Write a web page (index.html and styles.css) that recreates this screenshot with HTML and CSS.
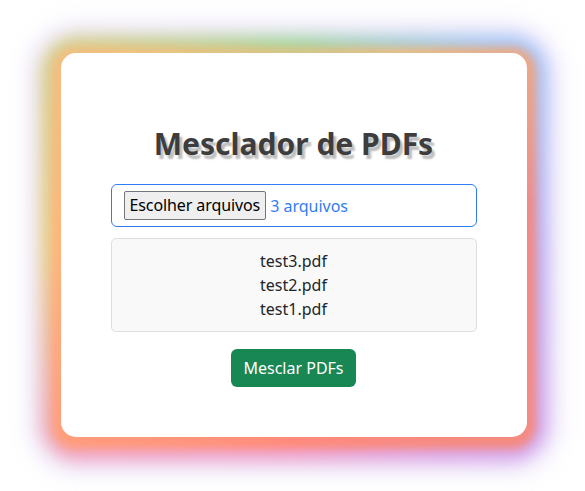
FILE: index.html
```html
<!DOCTYPE html>
<html lang="pt-BR">
<head>
<meta charset="utf-8">
<title>Mesclador de PDFs</title>
<link rel="stylesheet" href="styles.css">
</head>
<body>
<main class="page">
  <div class="glow">
    <section class="card">
      <h1 class="title">Mesclador de PDFs</h1>
      <div class="file-input">
        <span class="file-btn">Escolher arquivos</span>
        <span class="file-count">3 arquivos</span>
      </div>
      <ul class="file-list">
        <li>test3.pdf</li>
        <li>test2.pdf</li>
        <li>test1.pdf</li>
      </ul>
      <button class="merge-btn" type="button">Mesclar PDFs</button>
    </section>
  </div>
</main>
</body>
</html>
```

FILE: styles.css
```css
* { box-sizing: border-box; }
html, body { margin: 0; background: #fff; }
body {
  font-family: "Noto Sans", "Open Sans", sans-serif;
  font-size: 16px;
  color: #212529;
}
.page {
  min-height: 100vh;
  display: flex;
  align-items: center;
  justify-content: center;
}
.glow {
  position: relative;
  isolation: isolate;
  width: 466px;
  margin-left: 2px;
  margin-top: -1px;
}
.glow::before {
  content: "";
  position: absolute;
  top: -18px; left: -21px; right: -21px; bottom: -25px;
  border-radius: 38px;
  background: conic-gradient(from 0deg,
    #a6d8a4 0deg, #a8c8f6 45deg, #bfb2f2 90deg, #d8a6ea 135deg,
    #f0a2cc 180deg, #f2a6c4 225deg, #e8cf8a 270deg, #d4d092 315deg, #a6d8a4 360deg);
  box-shadow: 0 0 16px 10px rgba(216, 200, 246, 0.5);
  filter: blur(8px);
  z-index: -2;
}
.glow::after {
  content: "";
  position: absolute;
  top: -6px; left: -9px; right: -9px; bottom: -12px;
  border-radius: 24px;
  background: conic-gradient(from 0deg,
    #d8c484 0deg, #e8bc84 30deg, #f08a86 80deg, #f58a80 135deg, #ff8a7a 180deg,
    #ff9a7a 225deg, #ffb47c 270deg, #f0c080 320deg, #d8c484 360deg);
  filter: blur(4px);
  z-index: -1;
}
.card {
  position: relative;
  background: #fff;
  border-radius: 15px;
  padding: 53px 50px 50px;
  text-align: center;
}
.title {
  margin: 20px 0 22px;
  font-size: 30px;
  line-height: 1.2;
  font-weight: 700;
  color: #3d3d3d;
  text-shadow: 3px 4px 2px #bdbdbd;
}
.file-input {
  display: flex;
  align-items: center;
  gap: 4px;
  height: 43px;
  padding: 0 12px;
  border: 1px solid #2f7cf6;
  border-radius: 6px;
  text-align: left;
}
.file-btn {
  display: inline-block;
  height: 29px;
  line-height: 27px;
  padding: 0 5px;
  background: #efefef;
  border: 1px solid #767676;
  border-radius: 2px;
  color: #000;
  letter-spacing: -0.1px;
}
.file-count { color: #2f7cf6; }
.file-list {
  list-style: none;
  margin: 11px 0 17px;
  padding: 10px;
  background: #f9f9f9;
  border: 1px solid #dedede;
  border-radius: 5px;
  line-height: 24px;
}
.merge-btn {
  font: inherit;
  line-height: 24px;
  padding: 7px 12px;
  background: #198754;
  color: #fff;
  border: 0;
  border-radius: 6px;
}
```
